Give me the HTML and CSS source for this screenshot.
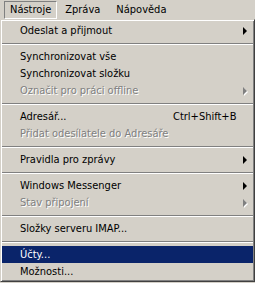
FILE: index.html
```html
<!DOCTYPE html>
<html lang="cs">
  <head>
    <meta charset="UTF-8" />
    <meta name="viewport" content="width=device-width, initial-scale=1.0" />
    <title>Nástroje</title>
    <link rel="stylesheet" href="styles.css">
  </head>
  <body>
    <div class="menubar">
      <span class="menubar-item active">Nástroje</span>
      <span class="menubar-item">Zpráva</span>
      <span class="menubar-item">Nápověda</span>
    </div>
    <div class="menu">
      <div class="item">Odeslat a přijmout<i class="arrow"></i></div>
      <div class="separator"></div>
      <div class="item">Synchronizovat vše</div>
      <div class="item">Synchronizovat složku</div>
      <div class="item disabled">Označit pro práci offline<i class="arrow"></i></div>
      <div class="separator"></div>
      <div class="item">Adresář...<span class="shortcut">Ctrl+Shift+B</span></div>
      <div class="item disabled">Přidat odesílatele do Adresáře</div>
      <div class="separator"></div>
      <div class="item">Pravidla pro zprávy<i class="arrow"></i></div>
      <div class="separator"></div>
      <div class="item">Windows Messenger<i class="arrow"></i></div>
      <div class="item disabled">Stav připojení<i class="arrow"></i></div>
      <div class="separator"></div>
      <div class="item">Složky serveru IMAP...</div>
      <div class="separator"></div>
      <div class="item selected">Účty...</div>
      <div class="item">Možnosti...</div>
    </div>
  </body>
</html>
```

FILE: styles.css
```css
body {
  margin: 0;
  background-color: #d4d0c8;
  font-family: Tahoma, "DejaVu Sans Condensed", "Liberation Sans", sans-serif;
  font-size: 11px;
  color: #000;
  overflow: hidden;
}

/* menu bar */

.menubar {
  display: flex;
  height: 18px;
  padding: 1px 0 0 4px;
}

.menubar-item {
  padding: 0 7px;
  line-height: 16px;
  border: 1px solid transparent;
}

.menubar-item.active {
  border-color: #808080 #fff #fff #808080;
  padding: 0 5px;
}

/* drop down */

.menu {
  width: 255px;
  padding: 2px 1px 1px 1px;
  border: 1px solid;
  border-color: #d4d0c8 #404040 #404040 #d4d0c8;
  box-shadow: inset 1px 1px #fff, inset -1px -1px #808080;
  box-sizing: border-box;
}

.item {
  display: flex;
  align-items: center;
  height: 17px;
  line-height: 17px;
  padding-left: 18px;
  white-space: nowrap;
}

.item.disabled {
  color: #808080;
  text-shadow: 1px 1px 0 #fff;
}

.item.selected {
  background-color: #0a246a;
  color: #fff;
}

.shortcut {
  margin-left: auto;
  width: 80px;
}

.arrow {
  margin-left: auto;
  margin-right: 6px;
  width: 0;
  height: 0;
  border-top: 4px solid transparent;
  border-bottom: 4px solid transparent;
  border-left: 4px solid #000;
}

.item.disabled .arrow {
  border-left-color: #808080;
  filter: drop-shadow(1px 1px 0 #fff);
}

.separator {
  height: 9px;
  padding-top: 4px;
  box-sizing: border-box;
}

.separator::before {
  content: "";
  display: block;
  height: 1px;
  background-color: #808080;
  border-bottom: 1px solid #fff;
}
```
